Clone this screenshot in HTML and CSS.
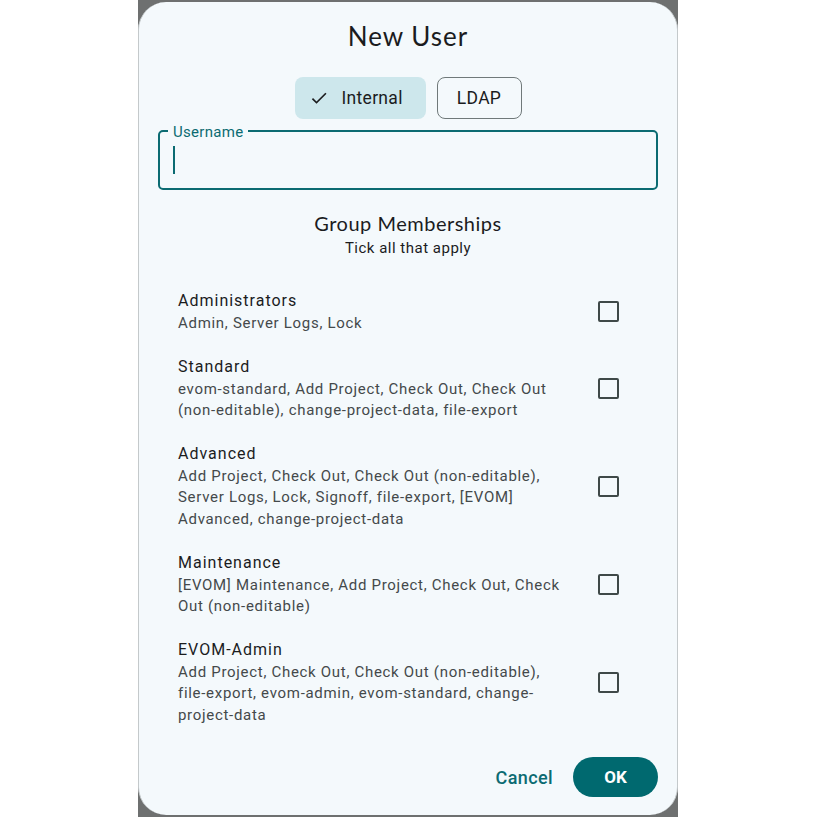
FILE: index.html
```html
<!DOCTYPE html>
<html lang="en">
<head>
<meta charset="utf-8">
<title>New User</title>
<link rel="stylesheet" href="styles.css">
</head>
<body>
<div class="backdrop">
  <div class="dialog">
    <h1 class="title">New User</h1>
    <div class="segmented">
      <button class="seg seg-on">
        <svg class="seg-icon" viewBox="0 0 24 24" width="20" height="20"><path d="M9 16.17L4.83 12l-1.42 1.41L9 19 21 7l-1.41-1.41z" fill="#1b1c1e"/></svg>
        <span>Internal</span>
      </button>
      <button class="seg seg-off"><span>LDAP</span></button>
    </div>
    <div class="field">
      <span class="field-label">Username</span>
      <span class="caret"></span>
    </div>
    <h2 class="section">Group Memberships</h2>
    <p class="hint">Tick all that apply</p>
    <div class="list">
      <div class="row">
        <div class="row-text">
          <div class="row-title">Administrators</div>
          <div class="row-sub">Admin, Server Logs, Lock</div>
        </div>
        <div class="check-wrap"><span class="check"></span></div>
      </div>
      <div class="row">
        <div class="row-text">
          <div class="row-title">Standard</div>
          <div class="row-sub">evom-standard, Add Project, Check Out, Check Out (non-editable), change-project-data, file-export</div>
        </div>
        <div class="check-wrap"><span class="check"></span></div>
      </div>
      <div class="row">
        <div class="row-text">
          <div class="row-title">Advanced</div>
          <div class="row-sub">Add Project, Check Out, Check Out (non-editable), Server Logs, Lock, Signoff, file-export, [EVOM] Advanced, change-project-data</div>
        </div>
        <div class="check-wrap"><span class="check"></span></div>
      </div>
      <div class="row">
        <div class="row-text">
          <div class="row-title">Maintenance</div>
          <div class="row-sub">[EVOM] Maintenance, Add Project, Check Out, Check Out (non-editable)</div>
        </div>
        <div class="check-wrap"><span class="check"></span></div>
      </div>
      <div class="row">
        <div class="row-text">
          <div class="row-title">EVOM-Admin</div>
          <div class="row-sub">Add Project, Check Out, Check Out (non-editable), file-export, evom-admin, evom-standard, change-project-data</div>
        </div>
        <div class="check-wrap"><span class="check"></span></div>
      </div>
    </div>
    <div class="actions">
      <button class="btn-text">Cancel</button>
      <button class="btn-filled">OK</button>
    </div>
  </div>
</div>
</body>
</html>
```

FILE: styles.css
```css
* { box-sizing: border-box; }
html, body { margin: 0; padding: 0; background: #ffffff; }
body { font-family: Roboto, "Liberation Sans", sans-serif; color: #1a1c1e; }

.backdrop {
  width: 540px;
  height: 817px;
  margin-left: 138px;
  background: #6e7070;
  padding: 2px 0;
}
.dialog {
  height: 100%;
  background: #f4f9fc;
  border-left: 1px solid #c4c9cb;
  border-right: 1px solid #c4c9cb;
  border-radius: 28px;
  padding: 18px 19px 18px;
  display: flex;
  flex-direction: column;
}
.title {
  margin: 0;
  font-family: Lato, sans-serif;
  font-weight: 400;
  font-size: 26px;
  line-height: 32px;
  letter-spacing: 1px;
  text-align: center;
  color: #1b1c1e;
}
.segmented {
  display: flex;
  justify-content: center;
  gap: 11px;
  margin-top: 25px;
}
.seg {
  height: 42px;
  border-radius: 8px;
  font-family: Roboto, sans-serif;
  font-size: 17.5px;
  letter-spacing: 0.3px;
  color: #1b1c1e;
  display: flex;
  align-items: center;
  cursor: pointer;
}
.seg-on {
  width: 131px;
  background: #cde7ec;
  border: none;
  padding: 0 0 0 14px;
  gap: 13px;
}
.seg-icon { display: block; flex: none; }
.seg-off {
  width: 85px;
  background: transparent;
  border: 1px solid #70797a;
  justify-content: center;
  padding: 0;
}
.field {
  position: relative;
  margin-top: 11px;
  height: 60px;
  border: 2px solid #0b6b72;
  border-radius: 5px;
  display: flex;
  align-items: center;
  padding-left: 13px;
}
.field-label {
  position: absolute;
  left: 8px;
  top: -9px;
  padding: 0 5px;
  background: #f4f9fc;
  font-size: 15px;
  line-height: 18px;
  color: #0b6b72;
  letter-spacing: 0.3px;
}
.caret {
  width: 2px;
  height: 28px;
  background: #0b6b72;
}
.section {
  margin: 20px 0 0;
  font-family: Lato, sans-serif;
  font-weight: 400;
  font-size: 20px;
  line-height: 26px;
  letter-spacing: 0.5px;
  text-align: center;
  color: #1b1c1e;
}
.hint {
  margin: 2px 0 0;
  font-size: 15px;
  line-height: 20px;
  letter-spacing: 0.5px;
  text-align: center;
  color: #1b1c1e;
}
.list {
  margin-top: 21px;
  display: flex;
  flex-direction: column;
}
.row {
  display: flex;
  align-items: center;
  padding: 10px 30px 10px 20px;
  gap: 20px;
}
.row-text { flex: 1; min-width: 0; }
.row-title {
  font-size: 16px;
  line-height: 24px;
  letter-spacing: 1px;
  color: #1b1c1e;
}
.row-sub {
  font-size: 15px;
  line-height: 21.6px;
  letter-spacing: 0.7px;
  color: #44494b;
}
.check-wrap {
  width: 40px;
  height: 40px;
  flex: none;
  display: flex;
  align-items: center;
  justify-content: center;
}
.check {
  width: 21px;
  height: 21px;
  border: 2.5px solid #3f4948;
  border-radius: 2px;
}
.actions {
  margin-top: auto;
  display: flex;
  justify-content: flex-end;
  align-items: center;
  gap: 8px;
}
.btn-text {
  background: transparent;
  border: none;
  height: 40px;
  padding: 0 12px;
  font-family: Roboto, sans-serif;
  font-size: 18px;
  font-weight: 500;
  letter-spacing: 0.4px;
  color: #0b6b72;
}
.btn-filled {
  width: 85px;
  height: 40px;
  border: none;
  border-radius: 20px;
  background: #00696f;
  color: #ffffff;
  font-family: Roboto, sans-serif;
  font-size: 17px;
  font-weight: 700;
}
```
